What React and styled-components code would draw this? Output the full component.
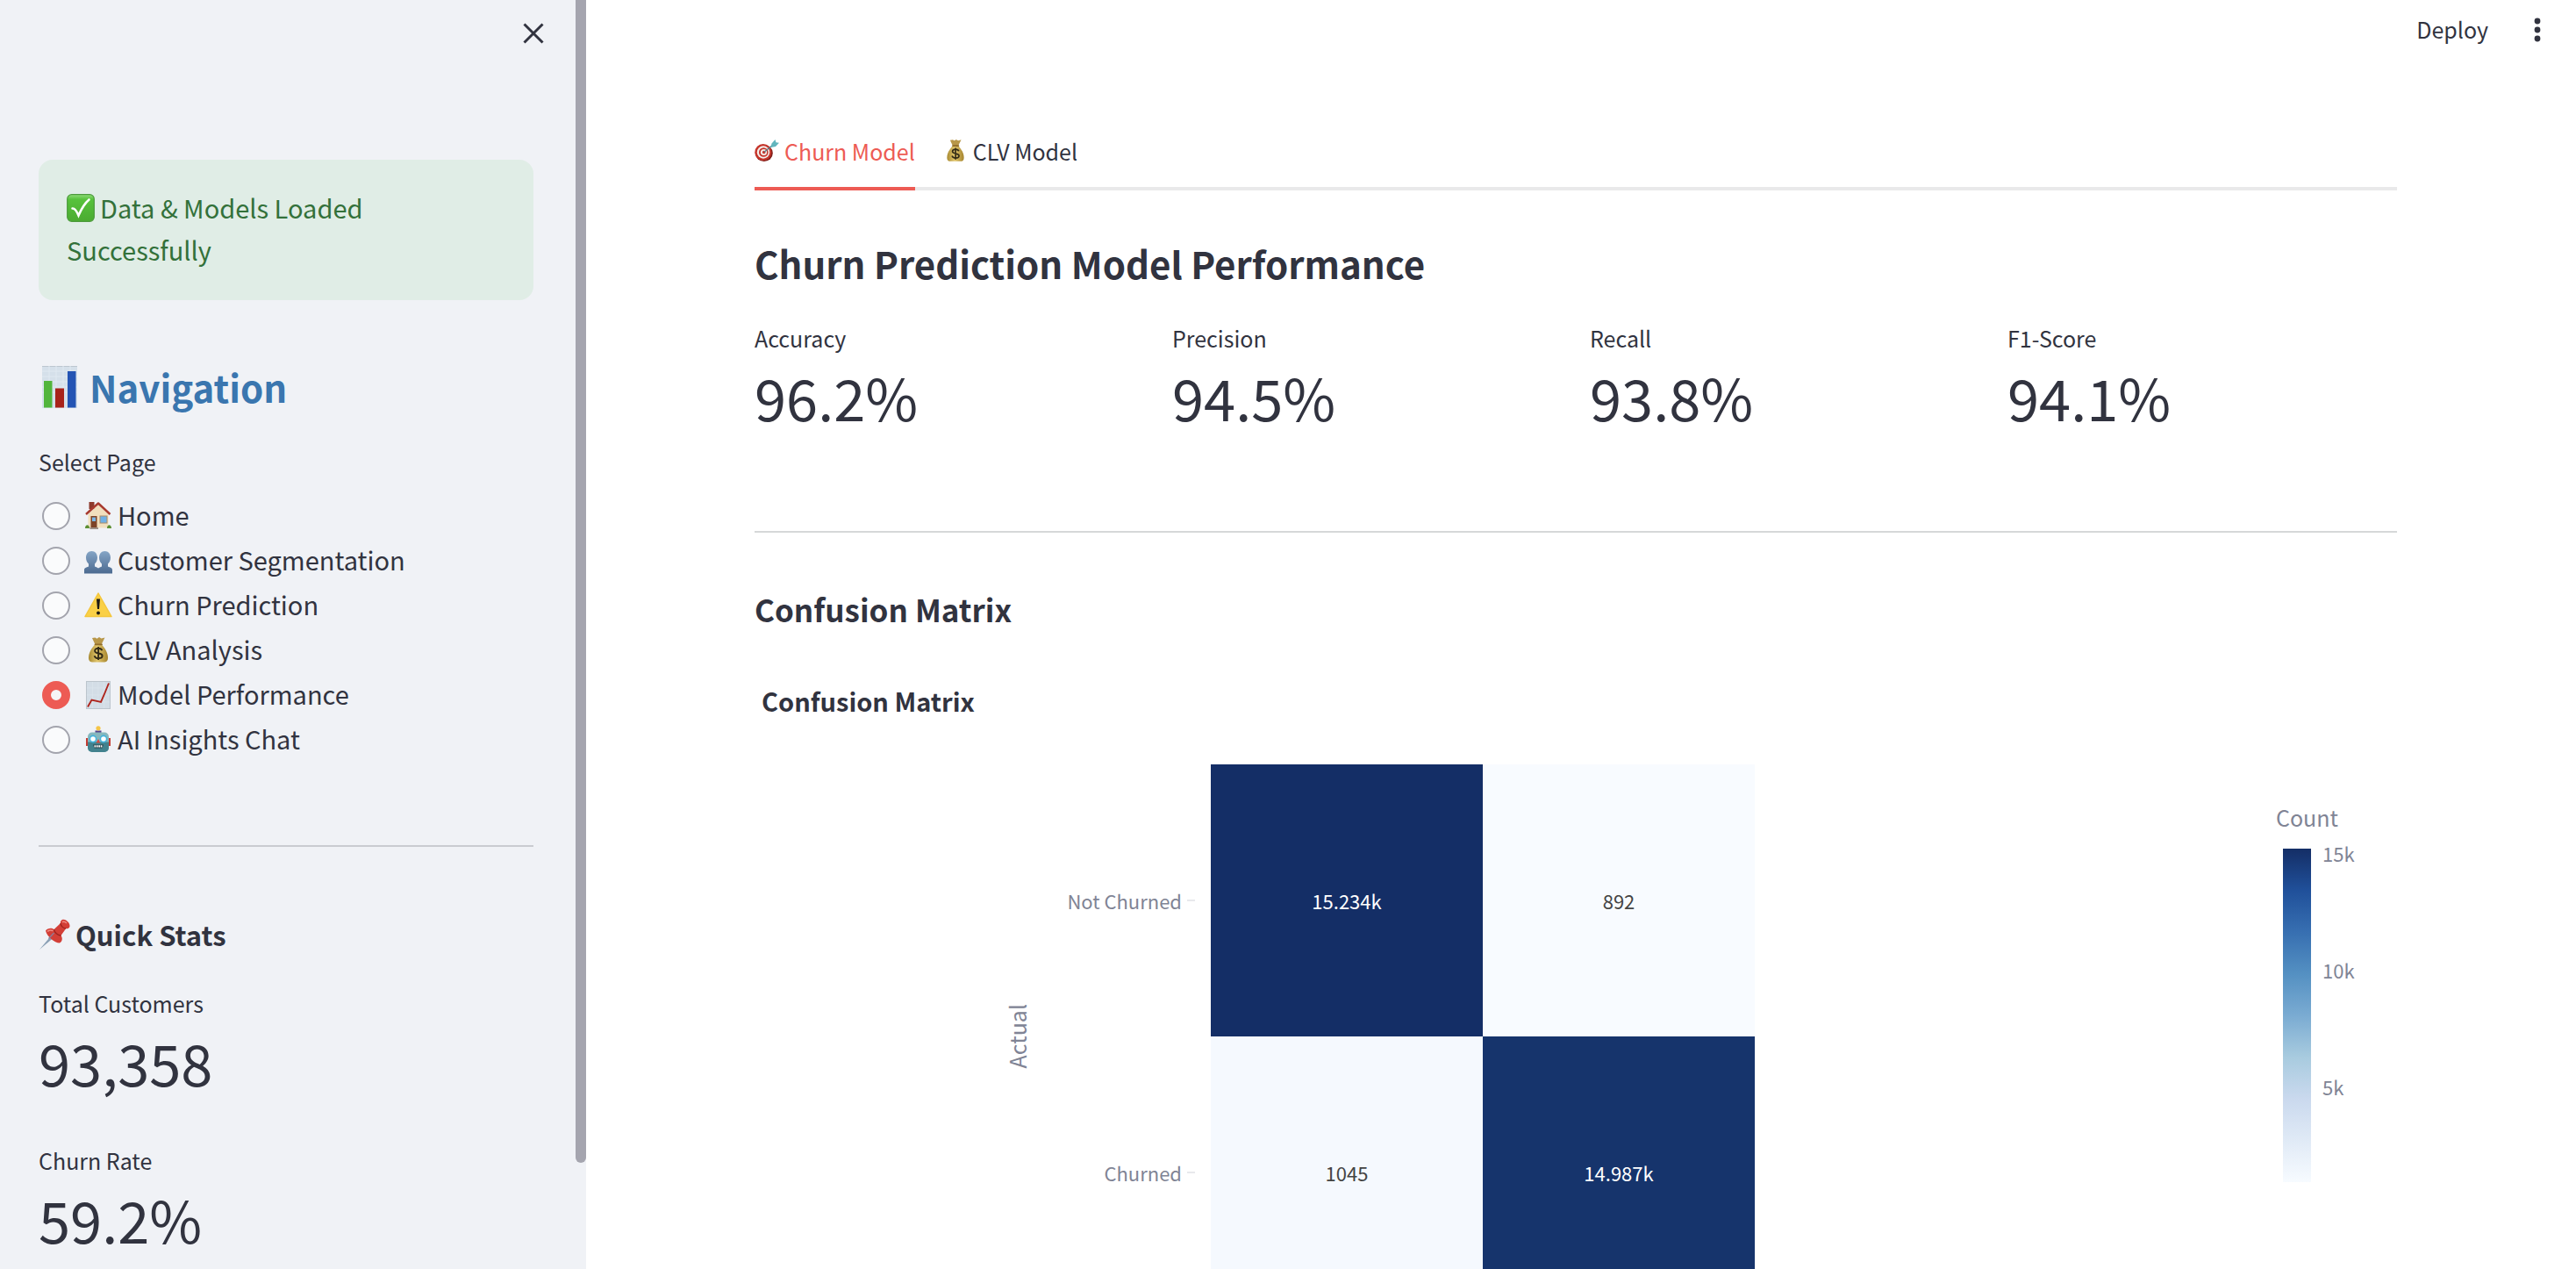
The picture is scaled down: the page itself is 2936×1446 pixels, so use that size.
import React from "react";
import styled, { createGlobalStyle, css } from "styled-components";

const Global = createGlobalStyle`
  *, *::before, *::after { box-sizing: border-box; }
  body { margin: 0; background: #ffffff; color: #31333f; font-family: "Noto Sans CJK JP", "Noto Sans", sans-serif; font-size: 29px; line-height: 48px; }
  h1, h2, h3, p, dl, dd, dt, fieldset, legend { margin: 0; padding: 0; border: 0; font-weight: inherit; }
  button { font: inherit; color: inherit; background: none; border: 0; padding: 0; cursor: pointer; }
`;

const Page = styled.div`
  display: flex;
  height: 100vh;
  overflow: hidden;
`;

/* ---------- icons ---------- */

const Icon = styled.svg`
  flex: none;
  width: ${(p) => p.$size || 32}px;
  height: ${(p) => p.$size || 32}px;
`;

const CheckIcon = () => (
  <Icon viewBox="0 0 32 32" aria-hidden="true">
    <defs>
      <linearGradient id="check-g" x1="0" y1="0" x2="0" y2="1">
        <stop offset="0" stopColor="#8fdc78" /><stop offset=".18" stopColor="#57c23c" /><stop offset="1" stopColor="#4bab31" />
      </linearGradient>
    </defs>
    <rect x=".7" y=".7" width="30.6" height="30.6" rx="5" fill="url(#check-g)" stroke="#4c9a3c" strokeWidth="1.2" />
    <path d="M6.5 16.5c2.600-.4 4.500 2 7 8C17 16.500 20 11 25.500 6.500" fill="none" stroke="#fff" strokeWidth="2.600" strokeLinecap="round" />
  </Icon>
);

const BarsIcon = () => (
  <Icon $size={48} viewBox="0 0 48 48" aria-hidden="true">
    <rect x="4" y="0" width="40" height="48" fill="#d5e0ea" />
    <path d="M4 .5h40" stroke="#bcc6cf" />
    <path d="M4 6h40M4 12h40M4 18h40M4 24h40M4 30h40M12 0v48M20 0v48M28 0v48M36 0v48" stroke="#e0e9f1" />
    <rect x="6" y="17" width="9.500" height="30.500" fill="#52b53c" />
    <rect x="19" y="25.500" width="10" height="22" fill="#a8231a" />
    <rect x="33" y="6" width="9.500" height="41.500" fill="#2454b4" />
  </Icon>
);

const HouseIcon = () => (
  <Icon viewBox="0 0 32 32" aria-hidden="true">
    <path d="M5.500 0h6v8h-6z" fill="#8d3a2c" />
    <path d="M4.500 14 16 3 27.500 14v15.500h-23z" fill="#f1dfbd" />
    <path d="M2 14 16 1.500 29.500 14" fill="none" stroke="#a83a2e" strokeWidth="2.400" strokeLinejoin="round" />
    <rect x="7.500" y="16" width="7" height="13.500" fill="#7d4327" /><rect x="9" y="17.500" width="4" height="4.500" fill="#79b7e8" />
    <rect x="18" y="16" width="8" height="8" fill="#6eb0e6" stroke="#a98c6a" />
    <path d="M6.500 30h9.500" stroke="#9d8f86" strokeWidth="2" />
    <path d="M1 30c0-5 5-5 5 0zM26 30c0-5 5-5 5 0z" fill="#5d8f33" />
  </Icon>
);

const PeopleIcon = () => (
  <Icon viewBox="0 0 32 32" aria-hidden="true">
    <defs>
      <linearGradient id="people-g" x1="0" y1="0" x2="0" y2="1">
        <stop offset="0" stopColor="#85a5c6" /><stop offset="1" stopColor="#4c6a90" />
      </linearGradient>
    </defs>
    <path d="M8.500 5c4 0 6.500 3 6.500 7.500 0 3.500-1.500 5.500-3 7v3c2 1 3 1.200 4 2 1-.8 2.500-1 4-2v-3c-1.500-1.500-3-3.500-3-7C17 8 19.500 5 23.500 5S30 8 30 12.500c0 3.500-1.500 5.500-3 7v3c3 1.200 5 1.500 5 4V30.500H0V26.500c0-2.500 2-2.800 5-4v-3c-1.500-1.500-3-3.500-3-7C2 8 4.500 5 8.500 5z" fill="url(#people-g)" />
  </Icon>
);

const WarningIcon = () => (
  <Icon viewBox="0 0 32 32" aria-hidden="true">
    <path d="M16 2 31 28.500H1z" fill="#fad046" stroke="#f4c63c" strokeWidth="1.500" strokeLinejoin="round" />
    <path d="M14 8.500h4l-1 11.500h-2z" fill="#1d1a14" /><circle cx="16" cy="24.500" r="2" fill="#1d1a14" />
  </Icon>
);

const MoneyIcon = ({ size }) => (
  <Icon $size={size} viewBox="0 0 32 32" aria-hidden="true">
    <defs>
      <linearGradient id="money-g" x1="0" y1="0" x2="1" y2="0">
        <stop offset="0" stopColor="#a88a32" /><stop offset=".45" stopColor="#e2c66c" /><stop offset="1" stopColor="#a5842e" />
      </linearGradient>
    </defs>
    <path d="M9 2 12.500 1.500l2 1.200L17 1l2.500 1.500L23.500 1.500l-4 8h-7z" fill="#b89749" />
    <path d="M12.500 9h7c4 4.500 7.500 9.500 7.500 15.500 0 4-2 5-5 5H10c-3 0-5-1-5-5C5 18.500 8.500 13.500 12.500 9z" fill="url(#money-g)" />
    <path d="M12.500 9.300h7.500" stroke="#8f6b2a" strokeWidth="1.800" strokeLinecap="round" />
    <path d="M20.300 16.300c-.6-1.800-2.300-2.500-4.200-2.500-2.400 0-4 1.200-4 2.900 0 4 8.500 1.700 8.500 5.500 0 1.900-1.900 2.900-4.300 2.900s-4.200-1-4.700-2.900M16.100 12v15" fill="none" stroke="#332b16" strokeWidth="1.900" />
  </Icon>
);

const TrendIcon = () => (
  <Icon viewBox="0 0 32 32" aria-hidden="true">
    <rect x="2.500" y=".5" width="27" height="31" fill="#d3dde6" stroke="#bcc5cd" />
    <path d="M3 8h26M3 16h26M3 24h26M9.500 1v30M16 1v30M22.500 1v30" stroke="#dbe4eb" strokeWidth=".8" />
    <path d="M4 29.500 8.500 21.500l10.500 2.500 3.500-8L28 2.500" fill="none" stroke="#ae251d" strokeWidth="1.900" />
  </Icon>
);

const RobotIcon = () => (
  <Icon viewBox="0 0 32 32" aria-hidden="true">
    <path d="M12.500 5.500h7v3h-7z" fill="#54428a" /><circle cx="16" cy="2.800" r="2.600" fill="#f5c548" />
    <path d="M2 14h3v9H2zM27 14h3v9h-3z" fill="#c43c33" />
    <rect x="4" y="7.500" width="24" height="22.500" rx="5" fill="#86b7bd" /><path d="M4 18.500h24V25a5 5 0 0 1-5 5H9a5 5 0 0 1-5-5z" fill="#42828e" />
    <circle cx="10" cy="15" r="3.600" fill="#fff" stroke="#44b3dc" strokeWidth="1.600" /><circle cx="22" cy="15" r="3.600" fill="#fff" stroke="#44b3dc" strokeWidth="1.600" />
    <path d="m16 15 2.300 4.500h-4.600z" fill="#d6483e" />
    <path d="M10 21.500h12l-1.500 4h-9z" fill="#26434a" /><path d="M11.500 23.300h9" stroke="#fff" strokeWidth="2.200" strokeDasharray="1.700 .7" />
  </Icon>
);

const PinIcon = () => (
  <Icon $size={36} viewBox="0 0 36 36" aria-hidden="true">
    <path d="M1 35 14 19.500l2.500 2.500z" fill="#8aa0b5" />
    <path d="M8 13.500c2-3 7-3.500 9.500-1.500l7.500-7c-.5-2 1-4.500 3.500-4.300C32 1 36 5 35.500 8.500c-.3 2.300-2.700 3-4.300 2.500l-5.700 8c2.200 3 1.500 7-1.500 8.500C18 27.500 9.500 20 8 13.500z" fill="#d33f37" />
    <path d="M17.500 12c.5 3.500 4 6.800 8 7M25 5c.5 3 3 5.600 6.200 6" fill="none" stroke="#9d231e" strokeWidth="1.300" />
    <path d="M10.500 14c2-1.300 4-1.300 5.500-.5M27.500 3.500c1.500-.8 3 0 4 1" fill="none" stroke="#f08b83" strokeWidth="1.500" strokeLinecap="round" />
    <path d="m11.500 22.500 6-6.500" stroke="#8a7f9a" strokeWidth="1.300" />
  </Icon>
);

const TargetIcon = () => (
  <Icon $size={28} viewBox="0 0 28 28" aria-hidden="true">
    <ellipse cx="10.800" cy="16.500" rx="10" ry="9.500" fill="#7f1d18" />
    <ellipse cx="9.800" cy="15.500" rx="9.500" ry="9.500" fill="#c5352b" />
    <ellipse cx="10" cy="15.500" rx="7.200" ry="7.200" fill="#f4eeea" />
    <ellipse cx="10.300" cy="15.500" rx="5.300" ry="5.300" fill="#c5352b" />
    <ellipse cx="10.500" cy="15.500" rx="3.600" ry="3.600" fill="#f4eeea" />
    <circle cx="10.700" cy="15.500" r="1.800" fill="#c5352b" />
    <path d="M11 15.300 21 7" stroke="#5b7f8a" strokeWidth="1.300" />
    <path d="M18.500 10 19.500 5.500l4-4.500 1 3.300 3.500.5L24 9z" fill="#62b5bd" />
  </Icon>
);

/* ---------- sidebar ---------- */

const Sidebar = styled.aside`
  display: flex;
  flex: none;
  width: 668px;
  background: #f0f2f6;
  overflow: hidden;
`;

const SidebarContent = styled.div`
  display: flex;
  flex: 1;
  flex-direction: column;
  padding: 0 48px 0 44px;
`;

const ScrollThumb = styled.div`
  width: 12px;
  height: 1325px;
  border-radius: 0 0 6px 6px;
  background: #a5a5af;
`;

const SidebarHeader = styled.div`
  display: flex;
  justify-content: flex-end;
  height: 182px;
  padding-top: 22px;
  margin-right: -16px;
`;

const Alert = styled.div`
  padding: 30px 32px 34px;
  border-radius: 16px;
  background: #e0ede6;
  color: #33713a;
`;

const AlertIcon = styled.span`
  display: inline-flex;
  vertical-align: middle;
  margin: -8px 6px 0 0;
`;

const NavTitle = styled.h1`
  display: flex;
  align-items: center;
  gap: 10px;
  margin-top: 70px;
  color: #3a76af;
  font-size: 42px;
  line-height: 58px;
  font-weight: 700;
`;

const NavGroup = styled.fieldset`
  min-width: 0;
  margin-top: 34px;
`;

const GroupLabel = styled.legend`
  font-size: 25px;
  line-height: 44px;
  margin-bottom: 14px;
`;

const NavOption = styled.label`
  display: flex;
  align-items: center;
  height: 51px;
  padding-left: 4px;
  gap: 6px;
  cursor: pointer;
`;

const NavText = styled.span`
  padding-bottom: 4px;
`;

const Radio = styled.input`
  appearance: none;
  flex: none;
  width: 32px;
  height: 32px;
  margin: 0 10px 0 0;
  border: 2px solid #a3a4ad;
  border-radius: 50%;
  background: #fafbfc;
  &:checked {
    border: 10px solid #ed5b54;
    background: #f6f4f7;
  }
`;

const Rule = styled.hr`
  width: 100%;
  height: 2px;
  margin: 0;
  border: 0;
  background: #d6d8d9;
`;

const NavRule = styled(Rule)`
  margin-top: 95px;
  background: #cacbd1;
`;

const StatsTitle = styled.h2`
  display: flex;
  align-items: center;
  gap: 6px;
  margin-top: 76px;
  font-size: 31px;
  line-height: 48px;
  font-weight: 700;
`;

const Stats = styled.dl`
  display: flex;
  flex-direction: column;
  gap: 45px;
  margin-top: 33px;
`;

const MetricLabel = styled.dt`
  font-size: 25px;
  line-height: 42px;
`;

const MetricValue = styled.dd`
  font-size: 65px;
  line-height: 92px;
`;

/* ---------- main ---------- */

const Main = styled.main`
  flex: 1;
  min-width: 0;
`;

const Toolbar = styled.header`
  display: flex;
  justify-content: flex-end;
  align-items: center;
  gap: 36px;
  height: 66px;
  padding-right: 24px;
  font-size: 25px;
  line-height: 40px;
`;

const MenuButton = styled.button`
  display: flex;
`;

const Content = styled.div`
  padding: 68px 204px 0 192px;
`;

const Tabs = styled.div`
  display: flex;
  gap: 32px;
  border-bottom: 4px solid #e9e9ea;
`;

const Tab = styled.button`
  display: flex;
  align-items: center;
  gap: 6px;
  height: 83px;
  margin-bottom: -4px;
  padding-bottom: 4px;
  border-bottom: 4px solid transparent;
  font-size: 25px;
  line-height: 40px;
  ${(p) => p.$active && css`
    color: #ed5b54;
    border-color: #ed5b54;
  `}
`;

const PageTitle = styled.h2`
  margin-top: 51px;
  font-size: 42px;
  line-height: 64px;
  font-weight: 700;
`;

const Metrics = styled.dl`
  display: grid;
  grid-template-columns: repeat(4, 1fr);
  gap: 32px;
  margin: 32px 0 107px;
`;

const SectionTitle = styled.h3`
  margin-top: 60px;
  font-size: 35px;
  line-height: 54px;
  font-weight: 700;
`;

const Chart = styled.figure`
  margin: 52px 0 0;
`;

const ChartTitle = styled.figcaption`
  padding-left: 8px;
  font-size: 29px;
  line-height: 50px;
  font-weight: 700;
`;

const ChartBody = styled.div`
  display: flex;
  align-items: flex-start;
  margin-top: 48px;
`;

const Plot = styled.div`
  display: grid;
  flex: 1;
  grid-template-columns: 1fr 310px 310px 1fr;
  grid-template-rows: 310px 310px;
  margin-right: 74px;
  font-size: 22px;
  line-height: 32px;
`;

const AxisRow = styled.div`
  grid-column: 1;
  grid-row: ${(p) => p.$row};
  display: flex;
  align-items: center;
  justify-content: flex-end;
  gap: 6px;
  padding-right: 18px;
  color: #808495;
  &::after {
    content: "";
    width: 9px;
    height: 2px;
    background: #e8e9ec;
  }
`;

const AxisTitle = styled.div`
  grid-column: 1;
  grid-row: 1 / 3;
  justify-self: end;
  align-self: center;
  margin-right: 201px;
  writing-mode: vertical-rl;
  rotate: 180deg;
  color: #808495;
  font-size: 25px;
  line-height: 40px;
`;

const Cell = styled.div`
  grid-column: ${(p) => p.$col};
  grid-row: ${(p) => p.$row};
  display: flex;
  align-items: center;
  justify-content: center;
  background: ${(p) => p.$fill};
  color: ${(p) => (p.$dark ? "#ffffff" : "#444444")};
`;

const Legend = styled.div`
  width: 138px;
  margin-top: 40px;
  color: #808495;
`;

const LegendTitle = styled.div`
  font-size: 25px;
  line-height: 40px;
`;

const Scale = styled.div`
  display: flex;
  gap: 13px;
  height: 380px;
  margin: 16px 0 0 8px;
`;

const Gradient = styled.div`
  width: 32px;
  background: linear-gradient(to top, #f7fbff, #e0eaf6, #cad9ee, #a8cbdf, #7aabd2, #5490c2, #376fb1, #20509a, #142e66);
`;

const Ticks = styled.div`
  display: flex;
  flex-direction: column;
  gap: 101px;
  margin-top: -11px;
  font-size: 22px;
  line-height: 32px;
`;

const NAV = [
  ["Home", HouseIcon],
  ["Customer Segmentation", PeopleIcon],
  ["Churn Prediction", WarningIcon],
  ["CLV Analysis", MoneyIcon],
  ["Model Performance", TrendIcon],
  ["AI Insights Chat", RobotIcon],
];

const SIDE_STATS = [["Total Customers", "93,358"], ["Churn Rate", "59.2%"]];

const METRICS = [["Accuracy", "96.2%"], ["Precision", "94.5%"], ["Recall", "93.8%"], ["F1-Score", "94.1%"]];

const CELLS = [
  { row: 1, col: 2, text: "15.234k", fill: "#142e66", dark: true },
  { row: 1, col: 3, text: "892", fill: "#f8fbff" },
  { row: 2, col: 2, text: "1045", fill: "#f5f9fe" },
  { row: 2, col: 3, text: "14.987k", fill: "#16346c", dark: true },
];

const Metric = ({ label, value }) => (
  <div>
    <MetricLabel>{label}</MetricLabel>
    <MetricValue>{value}</MetricValue>
  </div>
);

export default function App() {
  const [page, setPage] = React.useState("Model Performance");
  const [tab, setTab] = React.useState("churn");
  return (
    <Page>
      <Global />
      <Sidebar>
        <SidebarContent>
          <SidebarHeader>
            <MenuButton aria-label="Close sidebar">
              <svg width="32" height="32" viewBox="0 0 32 32"><path d="m5.500 5.500 21 21m0-21-21 21" stroke="#31333f" strokeWidth="3" /></svg>
            </MenuButton>
          </SidebarHeader>
          <Alert role="status">
            <AlertIcon><CheckIcon /></AlertIcon>Data &amp; Models Loaded Successfully
          </Alert>
          <NavTitle><BarsIcon />Navigation</NavTitle>
          <NavGroup>
            <GroupLabel>Select Page</GroupLabel>
            {NAV.map(([name, Glyph]) => (
              <NavOption key={name}>
                <Radio type="radio" name="page" checked={page === name} onChange={() => setPage(name)} />
                <Glyph />
                <NavText>{name}</NavText>
              </NavOption>
            ))}
          </NavGroup>
          <NavRule />
          <StatsTitle><PinIcon />Quick Stats</StatsTitle>
          <Stats>
            {SIDE_STATS.map(([label, value]) => <Metric key={label} label={label} value={value} />)}
          </Stats>
        </SidebarContent>
        <ScrollThumb />
      </Sidebar>
      <Main>
        <Toolbar>
          <button>Deploy</button>
          <MenuButton aria-label="Menu">
            <svg width="40" height="40" viewBox="0 0 40 40" fill="#31333f"><circle cx="20" cy="11" r="3.400" /><circle cx="20" cy="21" r="3.400" /><circle cx="20" cy="31" r="3.400" /></svg>
          </MenuButton>
        </Toolbar>
        <Content>
          <Tabs role="tablist">
            <Tab role="tab" aria-selected={tab === "churn"} $active={tab === "churn"} onClick={() => setTab("churn")}><TargetIcon />Churn Model</Tab>
            <Tab role="tab" aria-selected={tab === "clv"} $active={tab === "clv"} onClick={() => setTab("clv")}><MoneyIcon size={28} />CLV Model</Tab>
          </Tabs>
          <PageTitle>Churn Prediction Model Performance</PageTitle>
          <Metrics>
            {METRICS.map(([label, value]) => <Metric key={label} label={label} value={value} />)}
          </Metrics>
          <Rule />
          <SectionTitle>Confusion Matrix</SectionTitle>
          <Chart>
            <ChartTitle>Confusion Matrix</ChartTitle>
            <ChartBody>
              <Plot>
                <AxisTitle>Actual</AxisTitle>
                <AxisRow $row={1}>Not Churned</AxisRow>
                <AxisRow $row={2}>Churned</AxisRow>
                {CELLS.map((c) => (
                  <Cell key={c.text} $row={c.row} $col={c.col} $fill={c.fill} $dark={c.dark}>{c.text}</Cell>
                ))}
              </Plot>
              <Legend>
                <LegendTitle>Count</LegendTitle>
                <Scale>
                  <Gradient />
                  <Ticks><span>15k</span><span>10k</span><span>5k</span></Ticks>
                </Scale>
              </Legend>
            </ChartBody>
          </Chart>
        </Content>
      </Main>
    </Page>
  );
}
